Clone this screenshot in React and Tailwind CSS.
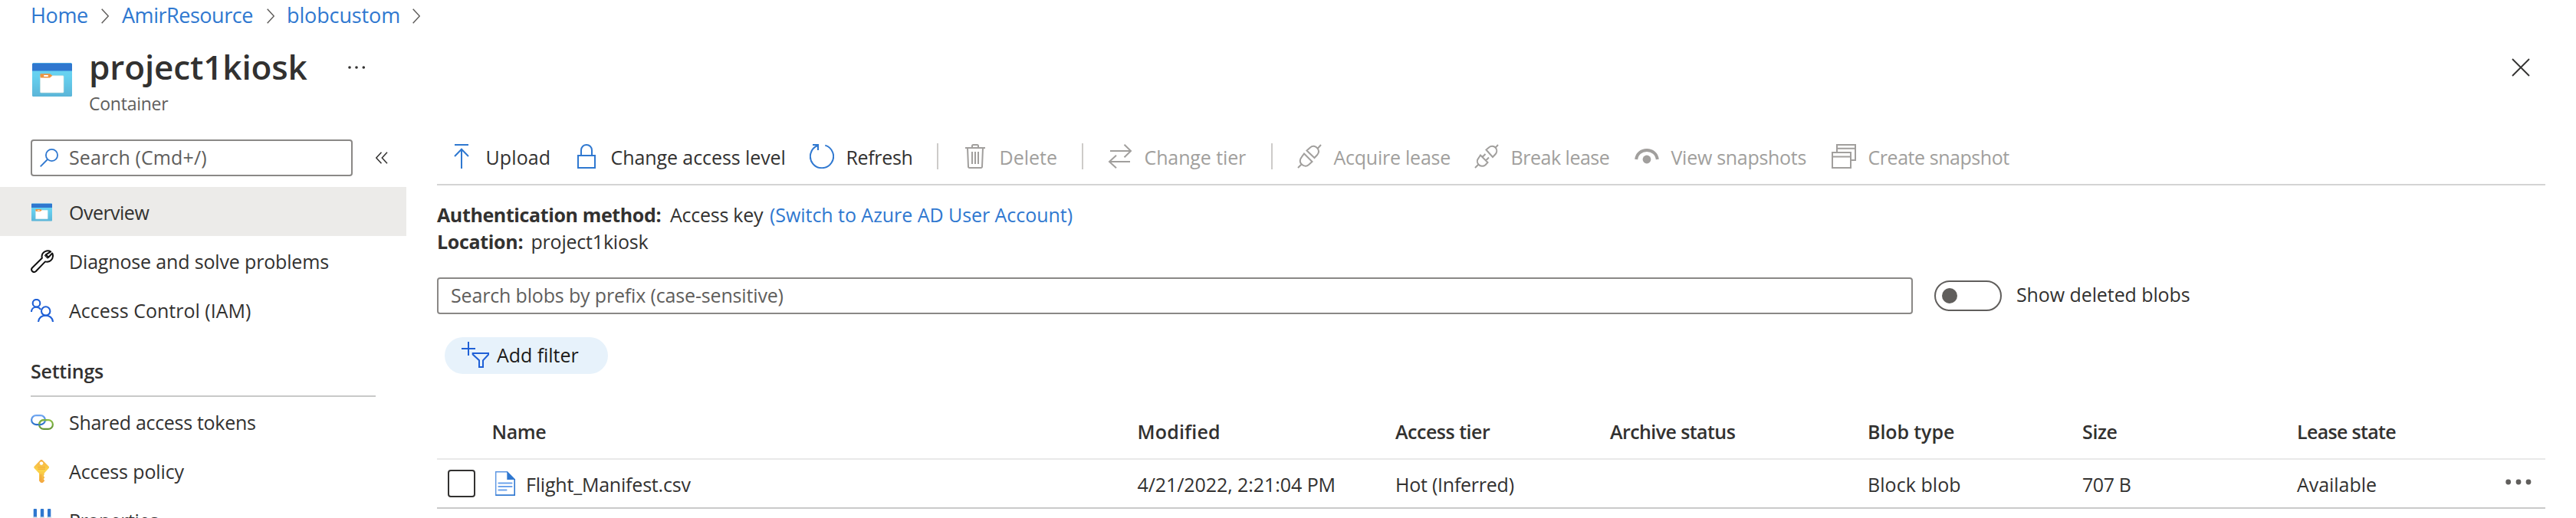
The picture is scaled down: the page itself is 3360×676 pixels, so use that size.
import React from "react";

const line = { fill: "none", stroke: "currentColor", strokeWidth: 2 };

const Chevron = () => (
  <svg className="mt-[11px] h-5 w-[10px] shrink-0 text-[#605e5c]" viewBox="0 0 10 20" {...line} strokeWidth="1.5">
    <path d="M0.7 0.7 9.3 10 0.7 19.3" />
  </svg>
);

const ContainerIcon = ({ className }) => (
  <svg className={className} viewBox="0 0 52 44">
    <defs>
      <linearGradient id="containerBody" x1="0" y1="0" x2="0" y2="1">
        <stop offset="0" stopColor="#69d4f3" />
        <stop offset="0.4" stopColor="#66d0ef" />
        <stop offset="1" stopColor="#5bb5d8" />
      </linearGradient>
    </defs>
    <rect x="0" y="0" width="52" height="44" rx="1.5" fill="url(#containerBody)" />
    <path d="M1.500 .5h49a1.500 1.500 0 0 1 1.500 1.500v8.500H0V2A1.500 1.500 0 0 1 1.500 .5z" fill="#2f77cf" />
    <path d="M11.500 16.800h28.500a1 1 0 0 1 1 1V38a1 1 0 0 1-1 1H11.500a1 1 0 0 1-1-1V17.800a1 1 0 0 1 1-1z" fill="#fff" stroke="#d9e6de" strokeWidth="0.6" />
    <path d="M11.500 14.300h11.500l3.300 2.400-3.300 2.900H11.500a1 1 0 0 1-1-1v-3.300a1 1 0 0 1 1-1z" fill="#ee9440" />
    <rect x="15" y="16" width="6" height="1.900" rx="0.900" fill="#fff" />
  </svg>
);

const WrenchIcon = () => (
  <svg className="h-[30px] w-[30px]" viewBox="0 0 30 30" {...line} stroke="#111" strokeWidth="2">
    <path d="M26.200 2.300C21.500 -0.200 15.200 2.500 14.600 8.200c-.1 1 0 1.700.3 2.600L2 23.500c-2.600 3 1.200 7.300 4.600 4.700L19 15.400c5.500 1.500 10.300-2.500 10-8 0-1.100-.3-1.900-.8-2.900l-5 5.300-3.400-3.400z" strokeLinejoin="round" />
    <path d="M19.800 6.400 23.200 9.800 22 11l-3.400-3.400z" strokeWidth="1.200" />
  </svg>
);

const PeopleIcon = () => (
  <svg className="h-[30px] w-[30px]" viewBox="0 0 30 30" {...line} stroke="#1f60d6" strokeWidth="2.1">
    <circle cx="7.500" cy="5.700" r="4.800" />
    <path d="M.9 17C1.100 13.200 3.800 10.700 7.300 10.700c2.600 0 4.700 1.300 5.800 3.300" />
    <circle cx="19.700" cy="16" r="5.700" />
    <path d="M10 30c.3-5.200 4.500-8.400 9.500-8.400s9.200 3.200 9.500 8.400" />
  </svg>
);

const LinksIcon = () => (
  <svg className="h-5 w-[30px]" viewBox="0 0 30 20" fill="none" strokeWidth="2.200">
    <defs>
      <linearGradient id="linkBlue" x1="0" y1="0" x2="0" y2="1">
        <stop offset="0" stopColor="#70a7f2" />
        <stop offset="1" stopColor="#2b70c9" />
      </linearGradient>
      <linearGradient id="linkGreen" x1="0" y1="0" x2="0" y2="1">
        <stop offset="0" stopColor="#8abf45" />
        <stop offset="1" stopColor="#659638" />
      </linearGradient>
    </defs>
    <rect x="11.100" y="7.100" width="17.800" height="11.800" rx="5.900" stroke="url(#linkGreen)" />
    <rect x="1.100" y="1.100" width="17.800" height="12" rx="6" stroke="url(#linkBlue)" />
    <path d="M11.200 13c0-3.300 2.500-5.900 5.900-5.900h4" stroke="#7cb243" />
  </svg>
);

const KeyIcon = () => (
  <svg className="-ml-px h-[30px] w-[30px]" viewBox="0 0 30 30">
    <defs>
      <linearGradient id="keyBody" x1="0" y1="0" x2="0" y2="1">
        <stop offset="0" stopColor="#f4ac44" />
        <stop offset="0.450" stopColor="#fbd549" />
        <stop offset="1" stopColor="#f2a340" />
      </linearGradient>
    </defs>
    <path fillRule="evenodd" d="M13.300.8a2.300 2.300 0 0 1 3.400 0l7.500 7.500a2.300 2.300 0 0 1 0 3.300l-5.500 6v2l-.7.700v1.200l1 1v1.200l-1 1v1.100l1 1v1l-2.600 2.500a1.300 1.300 0 0 1-1.800 0L12 27.600V17.800l-5.900-6.200a2.300 2.300 0 0 1 0-3.300zM15 2.400a2.300 2.300 0 1 0 .01 0z" fill="url(#keyBody)" />
    <path d="M10.300 9.800h9.700M10.300 12.200h9.700" stroke="#efa33c" strokeWidth="1" />
    <path d="M14.300 19v8" stroke="#e99a38" strokeWidth="0.800" />
  </svg>
);

const SlidersIcon = () => (
  <svg className="h-[30px] w-[30px]" viewBox="0 0 30 30">
    <g fill="#2f77cf">
      <rect x="3.700" y="0" width="4.300" height="26" rx="1" />
      <rect x="12.800" y="0" width="4.400" height="26" rx="1" />
      <rect x="22" y="0" width="4.300" height="26" rx="1" />
    </g>
    <g fill="#dfe3e8">
      <rect x="2.700" y="10.500" width="6.300" height="5" rx="1" />
      <rect x="11.800" y="10.500" width="6.400" height="5" rx="1" />
      <rect x="21" y="10.500" width="6.300" height="5" rx="1" />
    </g>
  </svg>
);

const UploadIcon = () => (
  <g stroke="#2f78d0">
    <path d="M7 1h18M16 6v26M7 16l9-9.200 9 9.200" />
  </g>
);
const LockIcon = () => (
  <g stroke="#2f78d0">
    <path d="M5 15h22v16H5zM9 15V8a7 7 0 0 1 14 0v7" />
  </g>
);
const RefreshIcon = () => (
  <g stroke="#2f78d0">
    <path d="M20.300 1.600A15.100 15.100 0 1 1 10.500 2" />
    <path d="M4 1.100h7V8" />
  </g>
);
const DeleteIcon = () => (
  <path d="M3 5h26M12 5V2.500a1.500 1.500 0 0 1 1.500-1.500h5A1.500 1.500 0 0 1 20 2.500V5M6 5l1 24.500a1.500 1.500 0 0 0 1.500 1.500h15a1.500 1.500 0 0 0 1.500-1.500L26 5M12 10v16M16 10v16M20 10v16" />
);
const TierIcon = () => <path d="M3 9h27M21.500 .800 30 9l-8.500 8.200M29 23H2M11 14.800 2 23l9 8.200" />;
const AcquireIcon = () => (
  <path d="M31 1l-4.500 5M12.500 8.500 17 4.500c3-2.800 7-2 9.300.8 2.200 2.600 2.200 6-.3 9L22.500 18zM9 12.500 19.500 23 15 27c-3 2.500-6.700 2-9.300-.7-2.300-2.500-2.500-6-.2-9zM5.500 26.500 1 31" />
);
const BreakIcon = () => (
  <path d="M31 1l-3 3.300M15.500 7.500 19 4.500c2.500-2.200 6.300-2.300 8.700.2 2.200 2.400 2 6-.2 8.600L24 17zM8 14.500l9.500 9.500-3 3.200c-2.600 2.300-6.500 2.200-8.900-.4-2.300-2.500-2.200-6.200.2-8.800zM10.500 17l4-4M15 21.500l4-4M5 27l-4 4" />
);
const EyeIcon = () => (
  <g>
    <path d="M2.200 20C3 12.500 8.800 8 16 8s13 4.500 13.800 12" strokeWidth="4" />
    <circle cx="16" cy="20" r="5.400" fill="currentColor" stroke="none" />
  </g>
);
const SnapshotIcon = () => <path d="M1 11h24v20H1zM1 16.500h24M7 11V1h24v20h-6M7 5.800h24" />;

const sidebarMain = [
  { label: "Overview", tracking: "tracking-[-0.52px]", icon: <ContainerIcon className="ml-px h-6 w-[27px]" />, active: true },
  { label: "Diagnose and solve problems", tracking: "tracking-[-0.16px]", icon: <WrenchIcon /> },
  { label: "Access Control (IAM)", tracking: "tracking-[0.01px]", icon: <PeopleIcon /> },
];
const sidebarSettings = [
  { label: "Shared access tokens", tracking: "tracking-[-0.3px]", icon: <LinksIcon /> },
  { label: "Access policy", tracking: "tracking-[-0.12px]", icon: <KeyIcon /> },
  { label: "Properties", tracking: "tracking-[-0.46px]", icon: <SlidersIcon /> },
];

const commands = [
  { label: "Upload", icon: <UploadIcon />, box: "w-[163px]", tracking: "tracking-[0.11px]", enabled: true },
  { label: "Change access level", icon: <LockIcon />, box: "w-[307px]", tracking: "tracking-[-0.08px]", enabled: true },
  { label: "Refresh", icon: <RefreshIcon />, box: "w-[166px]", tracking: "tracking-[-0.35px]", enabled: true },
  { divider: true },
  { label: "Delete", icon: <DeleteIcon />, box: "w-[155px]", tracking: "tracking-[0.01px]" },
  { divider: true },
  { label: "Change tier", icon: <TierIcon />, box: "w-[213px]", tracking: "tracking-[-0.11px]" },
  { divider: true },
  { label: "Acquire lease", icon: <AcquireIcon />, box: "w-[231px]", tracking: "tracking-[-0.24px]" },
  { label: "Break lease", icon: <BreakIcon />, box: "w-[209px]", tracking: "tracking-[-0.48px]" },
  { label: "View snapshots", icon: <EyeIcon />, box: "w-[257px]", tracking: "tracking-[-0.29px]" },
  { label: "Create snapshot", icon: <SnapshotIcon />, box: "w-[260px]", tracking: "tracking-[-0.45px]" },
];

const columns = [
  { label: "Name", tracking: "tracking-[-0.38px]" },
  { label: "Modified", tracking: "tracking-[0.18px]" },
  { label: "Access tier", tracking: "tracking-[-0.49px]" },
  { label: "Archive status", tracking: "tracking-[-0.58px]" },
  { label: "Blob type", tracking: "tracking-[-0.09px]" },
  { label: "Size", tracking: "tracking-[-0.36px]" },
  { label: "Lease state", tracking: "tracking-[-0.67px]" },
];

const grid = "grid grid-cols-[71.5px_842px_336.5px_280px_336px_280px_280px_324px]";

function NavItem({ item }) {
  return (
    <li className={`flex h-16 w-[530px] pl-10 ${item.active ? "bg-[#ecebe9]" : ""}`}>
      <span className="flex h-[66px] w-[50px] items-center">{item.icon}</span>
      <span className={`leading-[66px] ${item.tracking}`}>{item.label}</span>
    </li>
  );
}

function Command({ item }) {
  if (item.divider) return <span className="mr-8 mt-[19px] h-[34px] w-0.5 shrink-0 bg-[#cdcbc9]" />;
  return (
    <button className={`flex shrink-0 gap-[15.5px] ${item.box} ${item.enabled ? "" : "text-[#a19f9d]"}`}>
      <svg className="mt-5 h-8 w-8 shrink-0" viewBox="0 0 32 32" {...line}>{item.icon}</svg>
      <span className={`leading-[74px] ${item.tracking}`}>{item.label}</span>
    </button>
  );
}

export default function App() {
  return (
    <div className="flex h-[676px] w-[3360px] flex-col overflow-hidden whitespace-nowrap bg-white font-['Open_Sans','Noto_Sans',sans-serif] text-[25px] text-[#323130]">
      <nav className="flex h-[39px] shrink-0 pl-10 text-[27px] leading-[39px] text-[#2f78d0]">
        <a className="w-[92px] tracking-[-0.35px]">Home</a>
        <Chevron />
        <a className="ml-[17px] w-[189px] tracking-[-0.47px]">AmirResource</a>
        <Chevron />
        <a className="ml-4 w-[164px] tracking-[-0.12px]">blobcustom</a>
        <Chevron />
      </nav>

      <header className="flex h-[129px] shrink-0 pl-[42px]">
        <ContainerIcon className="mt-[43px] h-11 w-[52px]" />
        <div className="ml-[22px] mt-[18px] w-[336px]">
          <h1 className="text-[44px] font-semibold leading-[60px] tracking-[-0.12px]">project1kiosk</h1>
          <p className="mt-0.5 text-[23px] leading-8 tracking-[-0.25px] text-[#605e5c]">Container</p>
        </div>
        <svg className="mt-[46px] h-1.5 w-[26px]" viewBox="0 0 26 6" fill="#323130">
          <circle cx="4" cy="3" r="1.800" />
          <circle cx="13" cy="3" r="1.800" />
          <circle cx="22.300" cy="3" r="1.800" />
        </svg>
        <svg className="ml-auto mr-[60px] mt-[37px] h-6 w-6" viewBox="0 0 24 24" {...line} strokeWidth="1.800">
          <path d="M1 1l22 22M23 1L1 23" />
        </svg>
      </header>

      <div className="flex shrink-0">
        <aside className="w-[530px] shrink-0 pt-[14px]">
          <div className="flex pl-10">
            <div className="flex h-12 w-[420px] rounded-[4px] border-2 border-[#8a8886]">
              <svg className="ml-[10px] mt-[10px] h-6 w-6 text-[#2f78d0]" viewBox="0 0 24 24" {...line} strokeWidth="1.800">
                <circle cx="15.500" cy="8.500" r="7.600" />
                <path d="M10 14 .7 23.300" />
              </svg>
              <span className="ml-[14px] leading-[42px] tracking-[0.12px] text-[#605e5c]">Search (Cmd+/)</span>
            </div>
            <svg className="ml-[30px] mt-[16px] h-4 w-4" viewBox="0 0 16 16" {...line} strokeWidth="1.500">
              <path d="M7.500 .8 .8 8l6.700 7.200M15 .8 8.300 8l6.700 7.200" />
            </svg>
          </div>
          <ul className="mt-[14px]">
            {sidebarMain.map((item) => <NavItem key={item.label} item={item} />)}
          </ul>
          <h2 className="ml-10 h-[82px] w-[450px] border-b-2 border-[#c8c9c8] pt-[18px] font-semibold leading-[60px] tracking-[-0.23px]">Settings</h2>
          <ul>
            {sidebarSettings.map((item) => <NavItem key={item.label} item={item} />)}
          </ul>
        </aside>

        <main className="ml-10 w-[2750px] shrink-0">
          <div className="flex h-[74px] border-b-2 border-[#d4d4d4] pl-4">
            {commands.map((item, i) => <Command key={i} item={item} />)}
          </div>

          <section className="pt-5">
            <div className="flex h-[35px] leading-9">
              <b className="w-[304px] font-bold tracking-[-0.38px]">Authentication method:</b>
              <span className="w-[130px] tracking-[-0.25px]">Access key</span>
              <a className="tracking-[-0.05px] text-[#2f78d0]">(Switch to Azure AD User Account)</a>
            </div>
            <div className="flex h-[35px] leading-9">
              <b className="w-[122.5px] font-bold tracking-[-0.32px]">Location:</b>
              <span className="tracking-[-0.21px]">project1kiosk</span>
            </div>
          </section>

          <div className="mt-[30px] flex h-12">
            <div className="h-12 w-[1925px] rounded-[4px] border-2 border-[#8a8886] pl-4 leading-[42px] tracking-[-0.16px] text-[#605e5c]">
              Search blobs by prefix (case-sensitive)
            </div>
            <div className="ml-7 mt-1 flex h-10 w-[88px] items-center rounded-full border-2 border-[#605e5c] pl-2">
              <span className="h-5 w-5 rounded-full bg-[#605e5c]" />
            </div>
            <span className="ml-[19px] leading-[44px] tracking-[-0.09px]">Show deleted blobs</span>
          </div>

          <button className="ml-[10px] mt-[30px] flex h-12 w-[213px] rounded-full bg-[#e7f2fb] pl-[22px] text-[#1b1a19]">
            <svg className="mt-[6px] h-9 w-9" viewBox="0 0 36 36" {...line} stroke="#1f60d6">
              <path d="M0 9h18M9 0v18" />
              <path d="M14.700 15h20.600v1.500L28 24.300V33h-5v-8.700L14.700 16.500z" />
            </svg>
            <span className="ml-[10px] leading-[46px] tracking-[-0.05px]">Add filter</span>
          </button>

          <div className={`${grid} h-28 border-b-2 border-[#e9e9e9] pt-[45px] font-semibold leading-[60px]`}>
            <span />
            {columns.map((c) => <span key={c.label} className={c.tracking}>{c.label}</span>)}
          </div>
          <div className={`${grid} h-16 border-b-2 border-[#cacaca] leading-[64px]`}>
            <span className="ml-[14px] mt-[13px] h-9 w-9 rounded-[4px] border-2 border-[#323130]" />
            <span className="flex">
              <svg className="ml-1 mt-[15px] h-8 w-[26px]" viewBox="0 0 26 32">
                <path d="M.7 .7H15.500L25.300 10.500V31.300H.7z" fill="#fff" stroke="#5b95e2" strokeWidth="1.400" />
                <path d="M15.300 0 26 11H15.300z" fill="#2f77cf" />
                <path d="M25.300 10v21.300H.7" fill="none" stroke="#2f77cf" strokeWidth="1.400" />
                <path d="M4.500 15.500h17M4.500 20h17M4.500 24.500h10" stroke="#6da3ec" strokeWidth="2.200" strokeLinecap="round" />
              </svg>
              <span className="ml-[14.5px] tracking-[-0.2px]">Flight_Manifest.csv</span>
            </span>
            <span className="tracking-[-0.07px]">4/21/2022, 2:21:04 PM</span>
            <span className="tracking-[-0.24px]">Hot (Inferred)</span>
            <span />
            <span className="tracking-[0.06px]">Block blob</span>
            <span className="tracking-[-0.42px]">707 B</span>
            <span className="flex">
              <span className="w-[271px] tracking-[-0.04px]">Available</span>
              <svg className="mt-[25px] h-2 w-9 shrink-0" viewBox="0 0 36 8" fill="#605e5c">
                <circle cx="4.700" cy="4" r="3.400" />
                <circle cx="18" cy="4" r="3.400" />
                <circle cx="31" cy="4" r="3.400" />
              </svg>
            </span>
          </div>
        </main>
      </div>
    </div>
  );
}
